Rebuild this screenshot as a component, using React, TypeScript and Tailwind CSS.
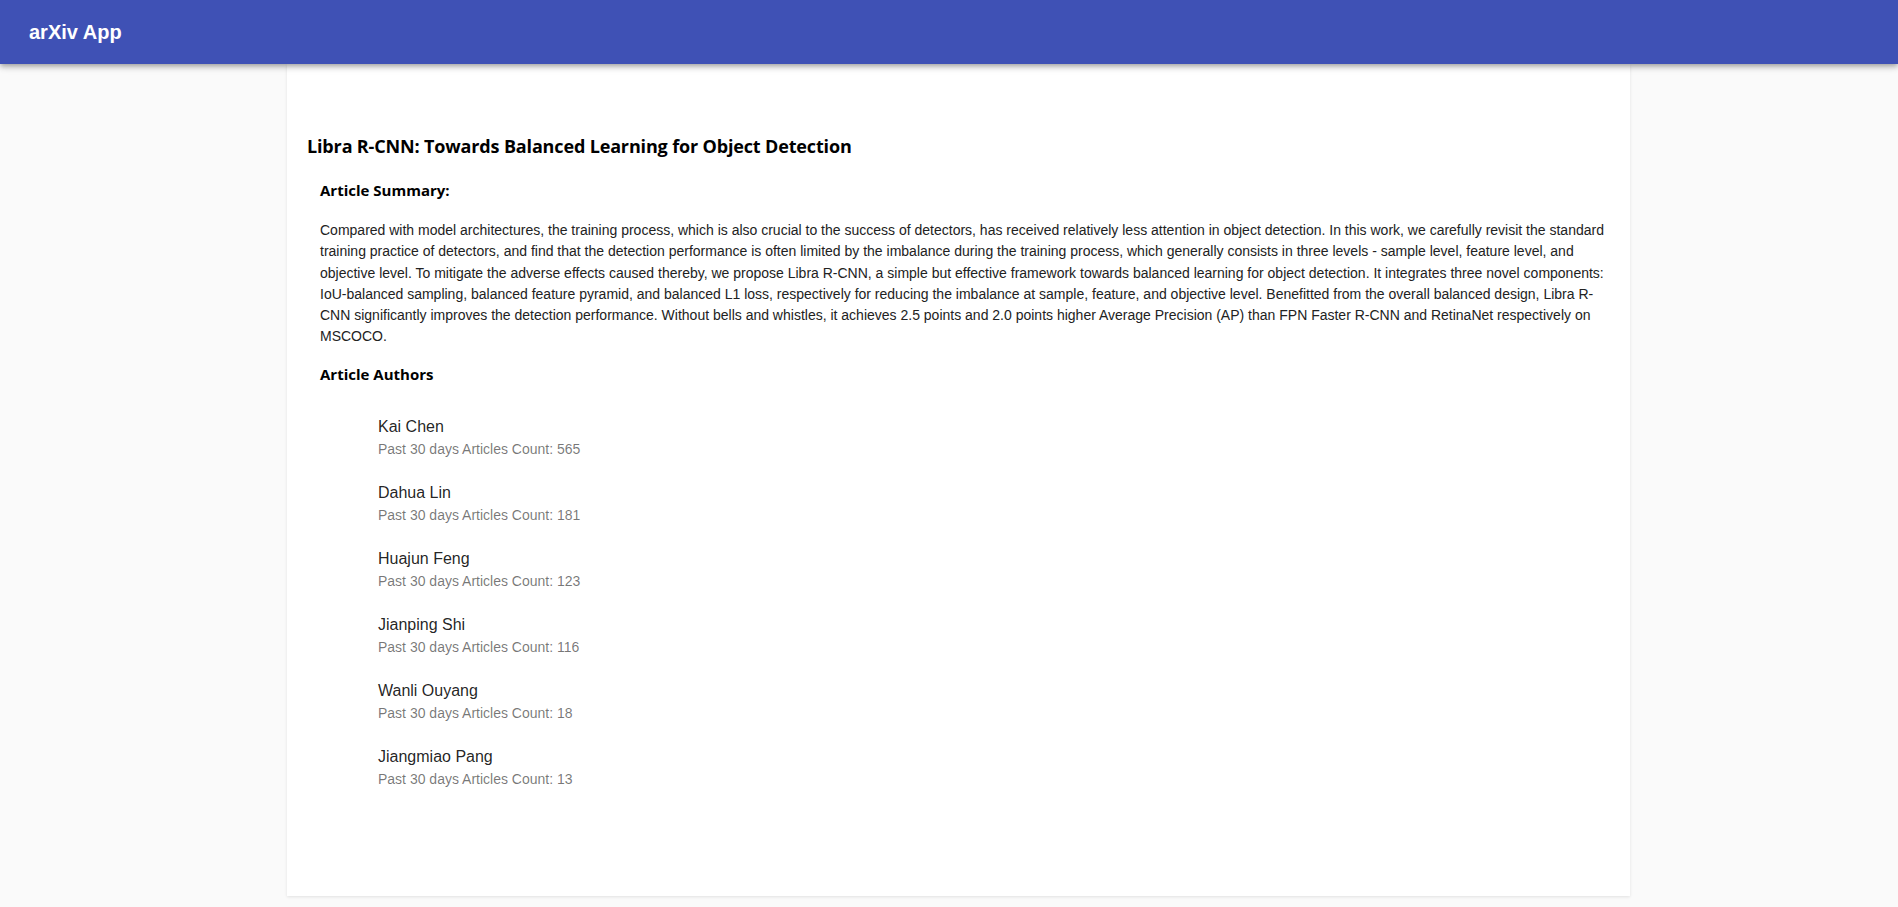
const authors = [
  { name: "Kai Chen", count: 565 },
  { name: "Dahua Lin", count: 181 },
  { name: "Huajun Feng", count: 123 },
  { name: "Jianping Shi", count: 116 },
  { name: "Wanli Ouyang", count: 18 },
  { name: "Jiangmiao Pang", count: 13 },
]

const summary =
  "Compared with model architectures, the training process, which is also crucial to the success of detectors, has received relatively less attention in object detection. In this work, we carefully revisit the standard training practice of detectors, and find that the detection performance is often limited by the imbalance during the training process, which generally consists in three levels - sample level, feature level, and objective level. To mitigate the adverse effects caused thereby, we propose Libra R-CNN, a simple but effective framework towards balanced learning for object detection. It integrates three novel components: IoU-balanced sampling, balanced feature pyramid, and balanced L1 loss, respectively for reducing the imbalance at sample, feature, and objective level. Benefitted from the overall balanced design, Libra R-CNN significantly improves the detection performance. Without bells and whistles, it achieves 2.5 points and 2.0 points higher Average Precision (AP) than FPN Faster R-CNN and RetinaNet respectively on MSCOCO."

function Header() {
  return (
    <header className="relative z-10 h-16 bg-[#3f51b5] flex items-center pl-[29px] shadow-[0_2px_4px_-1px_rgba(0,0,0,0.2),0_4px_5px_0_rgba(0,0,0,0.14),0_1px_10px_0_rgba(0,0,0,0.12)]">
      <h1 className="text-white text-[20px] font-bold font-['Liberation_Sans',Arial,sans-serif]">arXiv App</h1>
    </header>
  )
}

export default function App() {
  return (
    <div className="min-h-[907px] bg-[#fafafa] font-['Liberation_Sans',Arial,sans-serif]">
      <Header />
      <div className="pl-[287px] pb-[11px]">
        <main className="w-[1343px] min-h-[832px] bg-white shadow-[0_1px_3px_rgba(0,0,0,0.1)] pl-[20px] pr-[14px] pt-[70px]">
          <h2 className="text-[18px] leading-[24px] font-bold text-black font-['Open_Sans',sans-serif] tracking-[-0.15px]">
            Libra R-CNN: Towards Balanced Learning for Object Detection
          </h2>

          <h3 className="mt-[22px] ml-[13px] text-[15px] leading-[20px] font-bold text-black font-['Open_Sans',sans-serif]">
            Article Summary:
          </h3>
          <p className="mt-[20px] ml-[13px] text-[14px] leading-[21.3px] text-[#222]">{summary}</p>

          <h3 className="mt-[16px] ml-[13px] text-[15px] leading-[20px] font-bold text-black font-['Open_Sans',sans-serif]">
            Article Authors
          </h3>

          <ul className="mt-[31px] ml-[71px] flex flex-col gap-[22px]">
            {authors.map((a) => (
              <li key={a.name} className="flex flex-col">
                <span className="text-[16px] leading-[24px] text-[rgba(0,0,0,0.87)]">{a.name}</span>
                <span className="text-[14px] leading-[20px] text-[rgba(0,0,0,0.54)]">
                  Past 30 days Articles Count: {a.count}
                </span>
              </li>
            ))}
          </ul>
        </main>
      </div>
    </div>
  )
}
